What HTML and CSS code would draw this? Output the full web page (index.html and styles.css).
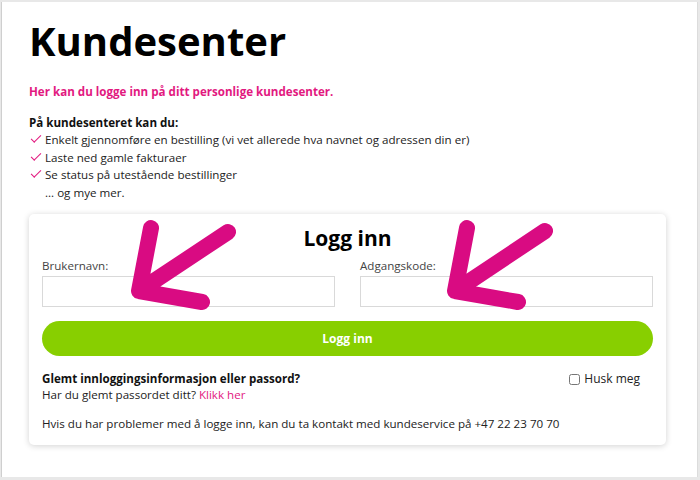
FILE: index.html
```html
<!DOCTYPE html>
<html>
  <head>
    <meta charset="UTF-8">
    <title>Kundesenter</title>
    <link rel="stylesheet" href="styles.css">
  </head>
  <body>
    <div class="page">
      <h1 class="title">Kundesenter</h1>
      <p class="lead">Her kan du logge inn på ditt personlige kundesenter.</p>

      <div class="perks">
        <strong class="perks-head">På kundesenteret kan du:</strong>
        <ul class="checks">
          <li>Enkelt gjennomføre en bestilling (vi vet allerede hva navnet og adressen din er)</li>
          <li>Laste ned gamle fakturaer</li>
          <li>Se status på utestående bestillinger</li>
        </ul>
        <div class="more">... og mye mer.</div>
      </div>

      <form class="login" id="loginForm">
        <h2 class="login-title">Logg inn</h2>
        <div class="fields">
          <div class="field">
            <label for="username">Brukernavn:</label>
            <input type="text" id="username">
          </div>
          <div class="field">
            <label for="password">Adgangskode:</label>
            <input type="password" id="password">
          </div>
        </div>
        <button type="submit" class="submit">Logg inn</button>

        <div class="extra">
          <div class="forgot">
            <strong>Glemt innloggingsinformasjon eller passord?</strong>
            <div>Har du glemt passordet ditt? <a href="#">Klikk her</a></div>
          </div>
          <label class="remember"><input type="checkbox"> Husk meg</label>
        </div>

        <p class="help">Hvis du har problemer med å logge inn, kan du ta kontakt med kundeservice på +47 22 23 70 70</p>
      </form>
    </div>

    <svg class="arrows" width="700" height="480" viewBox="0 0 700 480">
      <path d="M151 228 L139 291 L202 302 M139 291 L228 232" />
      <path d="M467 228 L455 291 L518 302 M455 291 L545 231" />
    </svg>
  </body>
</html>
```

FILE: styles.css
```css
html, body {
  margin: 0;
}

html {
  background: #e8e8e8;
}

body {
  padding: 2px 2px 3px 1px;
  font-family: "Open Sans", "DejaVu Sans", sans-serif;
  font-size: 11.6px;
  color: #222;
}

.page {
  height: 475px;
  box-sizing: border-box;
  background: #fff;
  border-left: 1px solid #cfcfcf;
  border-right: 1px solid #dcdcdc;
  padding: 17px 31px 0 27px;
}

.title {
  margin: 0;
  font-size: 40px;
  line-height: 44px;
  font-weight: 700;
  color: #000;
}

.lead {
  margin: 21px 0 0;
  font-size: 11.6px;
  font-weight: 700;
  color: #e2197f;
}

.perks {
  margin-top: 16px;
  line-height: 17.5px;
}

.perks-head {
  display: block;
  line-height: 16px;
  color: #111;
}

.checks {
  list-style: none;
  margin: 0;
  padding: 0;
}

.checks li {
  position: relative;
  padding-left: 16px;
}

.checks li::before {
  content: "";
  position: absolute;
  left: 2px;
  top: 4px;
  width: 9px;
  height: 4px;
  border-left: 1.8px solid #e2197f;
  border-bottom: 1.8px solid #e2197f;
  transform: rotate(-45deg);
}

.more {
  padding-left: 16px;
}

.login {
  margin-top: 13px;
  background: #fff;
  border-radius: 5px;
  box-shadow: 0 1px 6px rgba(0, 0, 0, 0.18);
  padding: 12px 13px 14px;
}

.login-title {
  margin: 0;
  text-align: center;
  font-size: 21px;
  line-height: 24px;
  font-weight: 700;
  color: #000;
}

.fields {
  display: grid;
  grid-template-columns: 1fr 1fr;
  gap: 25px;
  margin-top: 8px;
}

.field label {
  display: block;
  color: #444;
  line-height: 16px;
}

.field input {
  display: block;
  box-sizing: border-box;
  width: 100%;
  height: 31px;
  margin-top: 2px;
  border: 1px solid #d9d9d9;
  background: #fff;
}

.submit {
  display: block;
  width: 100%;
  height: 35px;
  margin-top: 14px;
  border: 0;
  border-radius: 18px;
  background: #88cf00;
  color: #fff;
  font-family: inherit;
  font-size: 12px;
  font-weight: 700;
}

.extra {
  display: flex;
  justify-content: space-between;
  align-items: flex-start;
  margin-top: 15px;
  line-height: 16px;
}

.forgot strong {
  display: block;
  color: #111;
}

.forgot a {
  color: #e2197f;
  text-decoration: none;
}

.remember {
  display: flex;
  align-items: center;
  gap: 4px;
  margin-right: 13px;
  font-size: 12px;
}

.remember input {
  margin: 0;
  width: 11px;
  height: 11px;
}

.help {
  margin: 13px 0 0;
}

.arrows {
  position: absolute;
  top: 0;
  left: 0;
  pointer-events: none;
}

.arrows path {
  fill: none;
  stroke: #d90b82;
  stroke-width: 16;
  stroke-linecap: round;
  stroke-linejoin: round;
}
```
